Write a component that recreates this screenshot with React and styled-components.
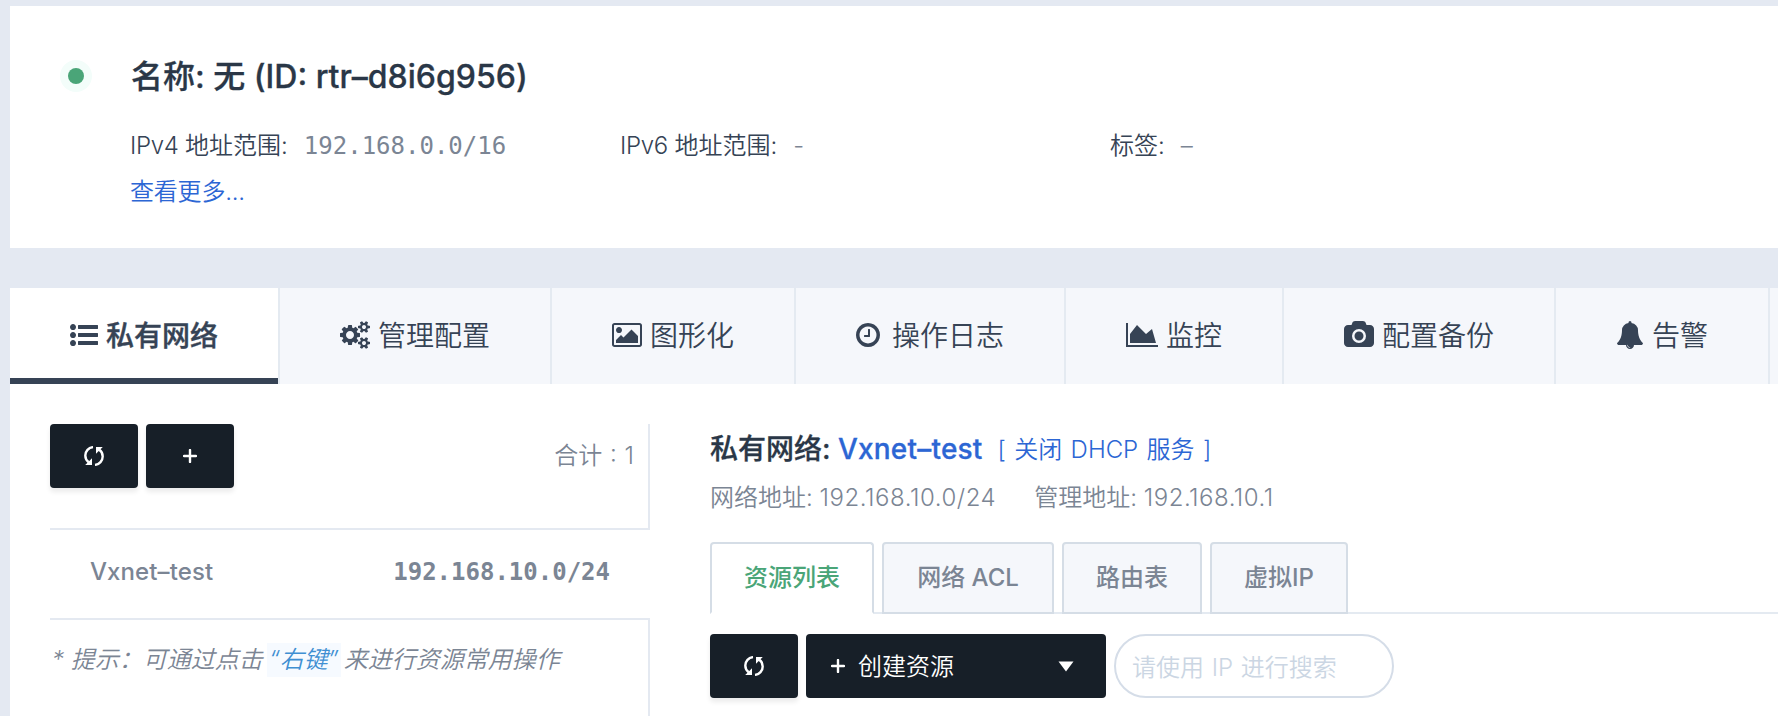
import React from "react";
import styled, { createGlobalStyle, css } from "styled-components";

const Global = createGlobalStyle`
  * { box-sizing: border-box; }
  html, body { margin: 0; padding: 0; }
  body {
    width: 1778px;
    height: 716px;
    overflow: hidden;
    background: #e4e9f2;
    font-family: Inter, "Noto Sans CJK SC", sans-serif;
    font-size: 24px;
    font-weight: 350;
    color: #364355;
  }
`;

const Page = styled.div`
  height: 716px;
  padding: 6px 0 0 10px;
  display: flex;
  flex-direction: column;
  gap: 40px;
  overflow: hidden;
`;

const Latin = styled.span`
  letter-spacing: ${(p) => p.$ls || 0}px;
`;

const Mono = styled.span`
  font-family: "DejaVu Sans Mono", monospace;
  font-size: 24px;
  color: #7b8594;
  font-weight: ${(p) => (p.$bold ? 700 : 400)};
`;

const Summary = styled.section`
  flex: none;
  height: 242px;
  background: #fff;
  display: flex;
  padding: 48px 0 0 50px;
`;

const Status = styled.div`
  width: 32px;
  height: 32px;
  margin: 6px 38px 0 0;
  border-radius: 50%;
  background: #f3fdfa;
  display: flex;
  align-items: center;
  justify-content: center;
  &::before {
    content: "";
    width: 16px;
    height: 16px;
    border-radius: 50%;
    background: #4aa578;
  }
`;

const Title = styled.h1`
  margin: 0;
  padding-left: 1px;
  height: 46px;
  line-height: 46px;
  font-size: 32px;
  font-weight: 500;
  -webkit-text-stroke: 0.3px currentColor;
  color: #2a3747;
  white-space: pre;
`;

const Facts = styled.div`
  display: flex;
  margin-top: 24px;
  height: 44px;
  line-height: 44px;
`;

const Fact = styled.div`
  width: 490px;
  display: flex;
  gap: 16px;
  white-space: pre;
`;

const Muted = styled.span`
  color: #7b8594;
`;

const More = styled.a`
  display: block;
  height: 48px;
  line-height: 48px;
  letter-spacing: -0.2px;
  color: #2c66d4;
`;

const Main = styled.section`
  flex: 1;
  background: #fff;
  display: flex;
  flex-direction: column;
`;

const TabBar = styled.nav`
  display: flex;
  height: 96px;
  flex: none;
  background: #f5f7fb;
`;

const Tab = styled.div`
  flex: none;
  width: ${(p) => p.$w}px;
  padding: 0 0 0 60px;
  display: flex;
  align-items: center;
  gap: ${(p) => p.$gap || 8}px;
  font-size: 28px;
  line-height: 94px;
  border-right: 2px solid #e4eaf1;
  color: #364355;
  ${(p) =>
    p.$active &&
    css`
      font-weight: 500;
      -webkit-text-stroke: 0.4px currentColor;
      background: linear-gradient(#364355, #364355) 0 100% / 100% 6px no-repeat #fff;
    `}
  svg { flex: none; display: block; fill: currentColor; margin-bottom: 2px; }
`;

const Body = styled.div`
  flex: 1;
  display: flex;
  padding: 40px 0 0 40px;
`;

const Side = styled.aside`
  width: 600px;
  flex: none;
  display: flex;
  flex-direction: column;
`;

const SideHead = styled.div`
  height: 106px;
  display: flex;
  gap: 8px;
  border-right: 2px solid #e4e9f1;
  border-bottom: 2px solid #e4e9f1;
`;

const Total = styled.div`
  margin-left: auto;
  margin-right: 14px;
  height: 64px;
  line-height: 64px;
  word-spacing: 1px;
  color: #7b8594;
  white-space: pre;
`;

const DarkButton = styled.button`
  flex: none;
  width: ${(p) => p.$w || 88}px;
  height: 64px;
  padding: 0 32px 0 25px;
  display: flex;
  align-items: center;
  justify-content: ${(p) => (p.$w ? "flex-start" : "center")};
  ${(p) => !p.$w && "padding: 0;"}
  border: 0;
  border-radius: 4px;
  background: #171f28;
  color: #fff;
  font: inherit;
  box-shadow: ${(p) => (p.$w ? "none" : "0 4px 5px rgba(0, 0, 0, 0.08)")};
  svg { display: block; }
`;

const ButtonLabel = styled.span`
  margin-left: 13px;
  margin-right: auto;
  padding-bottom: 4px;
`;

const NetRow = styled.div`
  height: 88px;
  padding: 0 40px 5px 40px;
  display: flex;
  align-items: center;
  justify-content: space-between;
  font-weight: 500;
  color: #7b8594;
`;

const Hint = styled.div`
  flex: 1;
  padding: 20px 0 0 2px;
  border-top: 2px solid #e4e9f1;
  border-right: 2px solid #e4e9f1;
  line-height: 40px;
  font-style: italic;
  color: #7b8594;
  white-space: pre;
`;

const Key = styled.span`
  display: inline-block;
  height: 34px;
  line-height: 34px;
  width: 74px;
  margin: 0 3px 0 4px;
  text-align: center;
  background: #f6faff;
  color: #3f8fd2;
`;

const Detail = styled.div`
  flex: 1;
  margin-left: 60px;
`;

const NetTitle = styled.h2`
  margin: 0;
  height: 50px;
  line-height: 50px;
  font-size: 28px;
  font-weight: 500;
  -webkit-text-stroke: 0.3px currentColor;
  color: #2a3747;
  white-space: pre;
  display: flex;
`;

const Blue = styled.span`
  color: #2c66d4;
  letter-spacing: 0.2px;
`;

const Action = styled.a`
  margin-left: 15px;
  padding-top: 1px;
  font-size: 24px;
  font-weight: 350;
  -webkit-text-stroke: 0;
  word-spacing: 1.6px;
  color: #2c66d4;
`;

const NetMeta = styled.div`
  height: 48px;
  line-height: 48px;
  display: flex;
  gap: 38px;
  color: #7b8594;
  white-space: pre;
`;

const SubTabs = styled.div`
  margin-top: 20px;
  height: 72px;
  display: flex;
  gap: 8px;
  background: linear-gradient(#e4eaf1, #e4eaf1) 0 100% / 100% 2px no-repeat;
`;

const SubTab = styled.div`
  width: ${(p) => p.$w}px;
  height: 72px;
  border: 2px solid #d5dde6;
  border-radius: 4px 4px 0 0;
  background: #f5f7fb;
  color: #7b8594;
  font-weight: 500;
  line-height: 68px;
  text-align: center;
  white-space: pre;
  ${(p) =>
    p.$active &&
    css`
      background: #fff;
      border-bottom-color: #fff;
      color: #4aa578;
    `}
`;

const Tools = styled.div`
  margin-top: 20px;
  display: flex;
  gap: 8px;
`;

const Search = styled.input`
  width: 280px;
  height: 64px;
  padding: 2px 16px 0;
  border: 2px solid #d5dde8;
  border-radius: 32px;
  background: #fff;
  font: inherit;
  letter-spacing: 0;
  word-spacing: 0.9px;
  outline: none;
  &::placeholder { color: #cbd6e3; opacity: 1; }
`;

const ICONS = {
  list: [0, 1792, "M384 1408q0 80-56 136t-136 56-136-56-56-136 56-136 136-56 136 56 56 136zm0-512q0 80-56 136t-136 56-136-56-56-136 56-136 136-56 136 56 56 136zm1408 416v192q0 13-9.5 22.5t-22.5 9.5h-1216q-13 0-22.5-9.5t-9.5-22.5v-192q0-13 9.5-22.5t22.5-9.5h1216q13 0 22.5 9.5t9.5 22.5zm-1408-928q0 80-56 136t-136 56-136-56-56-136 56-136 136-56 136 56 56 136zm1408 416v192q0 13-9.5 22.5t-22.5 9.5h-1216q-13 0-22.5-9.5t-9.5-22.5v-192q0-13 9.5-22.5t22.5-9.5h1216q13 0 22.5 9.5t9.5 22.5zm0-512v192q0 13-9.5 22.5t-22.5 9.5h-1216q-13 0-22.5-9.5t-9.5-22.5v-192q0-13 9.5-22.5t22.5-9.5h1216q13 0 22.5 9.5t9.5 22.5z"],
  cogs: [-64, 1920, "M832 896q0-106-75-181t-181-75-181 75-75 181 75 181 181 75 181-75 75-181zm768 512q0-52-38-90t-90-38-90 38-38 90q0 53 37.5 90.5t90.5 37.5 90.5-37.5 37.5-90.5zm0-1024q0-52-38-90t-90-38-90 38-38 90q0 53 37.5 90.5t90.5 37.5 90.5-37.5 37.5-90.5zm-384 421v185q0 10-7 19.5t-16 10.5l-155 24q-11 35-32 76 34 48 90 115 7 11 7 20 0 12-7 19-23 30-82.5 89.5t-78.5 59.5q-11 0-21-7l-115-90q-37 19-77 31-11 108-23 155-7 24-30 24h-186q-11 0-20-7.5t-10-17.5l-23-153q-34-10-75-31l-118 89q-7 7-20 7-11 0-21-8-144-133-144-160 0-9 7-19 10-14 41-53t47-61q-23-44-35-82l-152-24q-10-1-17-9.5t-7-19.5v-185q0-10 7-19.5t16-10.5l155-24q11-35 32-76-34-48-90-115-7-11-7-20 0-12 7-20 22-30 82-89t79-59q11 0 21 7l115 90q34-18 77-32 11-108 23-154 7-24 30-24h186q11 0 20 7.5t10 17.5l23 153q34 10 75 31l118-89q8-7 20-7 11 0 21 8 144 133 144 160 0 8-7 19-12 16-42 54t-45 60q23 48 34 82l152 23q10 2 17 10.5t7 19.5zm640 533v140q0 16-149 31-12 27-30 52 51 113 51 138 0 4-4 7-122 71-124 71-8 0-46-47t-52-68q-20 2-30 2t-30-2q-14 21-52 68t-46 47q-2 0-124-71-4-3-4-7 0-25 51-138-18-25-30-52-149-15-149-31v-140q0-16 149-31 13-29 30-52-51-113-51-138 0-4 4-7 4-2 35-20t59-34 30-16q8 0 46 46.5t52 67.5q20-2 30-2t30 2q51-71 92-112l6-2q4 0 124 70 4 3 4 7 0 25-51 138 17 23 30 52 149 15 149 31zm0-1024v140q0 16-149 31-12 27-30 52 51 113 51 138 0 4-4 7-122 71-124 71-8 0-46-47t-52-68q-20 2-30 2t-30-2q-14 21-52 68t-46 47q-2 0-124-71-4-3-4-7 0-25 51-138-18-25-30-52-149-15-149-31v-140q0-16 149-31 13-29 30-52-51-113-51-138 0-4 4-7 4-2 35-20t59-34 30-16q8 0 46 46.5t52 67.5q20-2 30-2t30 2q51-71 92-112l6-2q4 0 124 70 4 3 4 7 0 25-51 138 17 23 30 52 149 15 149 31z"],
  image: [-64, 1920, "M576 576q0 80-56 136t-136 56-136-56-56-136 56-136 136-56 136 56 56 136zm1024 384v448h-1408v-192l320-320 160 160 512-512zm96-704h-1600q-13 0-22.5 9.5t-9.5 22.5v1216q0 13 9.5 22.5t22.5 9.5h1600q13 0 22.5-9.5t9.5-22.5v-1216q0-13-9.5-22.5t-22.5-9.5zm160 32v1216q0 66-47 113t-113 47h-1600q-66 0-113-47t-47-113v-1216q0-66 47-113t113-47h1600q66 0 113 47t47 113z"],
  clock: [128, 1536, "M1024 544v448q0 14-9 23t-23 9h-320q-14 0-23-9t-9-23v-64q0-14 9-23t23-9h224v-352q0-14 9-23t23-9h64q14 0 23 9t9 23zm416 352q0-148-73-273t-198-198-273-73-273 73-198 198-73 273 73 273 198 198 273 73 273-73 198-198 73-273zm224 0q0 209-103 385.5t-279.5 279.5-385.5 103-385.5-103-279.5-279.5-103-385.5 103-385.5 279.5-279.5 385.5-103 385.5 103 279.5 279.5 103 385.5z"],
  area: [-128, 2048, "M1920 1536v128h-2048v-1536h128v1408h1920zm-384-1024l256 896h-1664v-576l448-576 576 576z"],
  camera: [-64, 1920, "M896 672q119 0 203.5 84.5t84.5 203.5-84.5 203.5-203.5 84.5-203.5-84.5-84.5-203.5 84.5-203.5 203.5-84.5zm704-416q106 0 181 75t75 181v896q0 106-75 181t-181 75h-1408q-106 0-181-75t-75-181v-896q0-106 75-181t181-75h224l51-136q19-49 69.5-84.5t103.5-35.5h512q53 0 103.5 35.5t69.5 84.5l51 136h224zm-704 1152q185 0 316.5-131.5t131.5-316.5-131.5-316.5-316.5-131.5-316.5 131.5-131.5 316.5 131.5 316.5 316.5 131.5z"],
  bell: [0, 1792, "M912 1696q0-16-16-16-59 0-101.5-42.5t-42.5-101.5q0-16-16-16t-16 16q0 73 51.5 124.5t124.5 51.5q16 0 16-16zm816-288q0 52-38 90t-90 38h-448q0 106-75 181t-181 75-181-75-75-181h-448q-52 0-90-38t-38-90q50-42 91-88t85-119.5 74.5-158.5 50-206 19.5-260q0-152 117-282.5t307-158.5q-8-19-8-39 0-40 28-68t68-28 68 28 28 68q0 20-8 39 190 28 307 158.5t117 282.5q0 139 19.5 260t50 206 74.5 158.5 85 119.5 91 88z"],
};

function TabIcon({ name }) {
  const [x, w, d] = ICONS[name];
  return (
    <svg width={w / 64} height="28" viewBox={`${x} 0 ${w} 1792`} overflow="visible">
      <path d={d} />
    </svg>
  );
}

function RefreshIcon() {
  return (
    <svg width="20" height="20" viewBox="0 0 20 20">
      <g fill="none" stroke="#fff" strokeWidth="2.4">
        <path d="M9 1.100C4.600 1.600 1.300 5.300 1.300 9.600C1.300 12.300 2.600 14.700 4.600 16.200" />
        <path d="M11 18.900C15.400 18.400 18.700 14.700 18.700 10.400C18.700 7.700 17.400 5.300 15.400 3.800" />
      </g>
      <path fill="#fff" d="M1.200 19L8 19L8 12.200ZM18.800 1L12 1L12 7.800Z" />
    </svg>
  );
}

function PlusIcon() {
  return (
    <svg width="14" height="14" viewBox="0 0 14 14">
      <path d="M7 1V13M1 7H13" stroke="#fff" strokeWidth="2.400" strokeLinecap="round" />
    </svg>
  );
}

const TABS = [
  { icon: "list", label: "私有网络", w: 270, active: true },
  { icon: "cogs", label: "管理配置", w: 272 },
  { icon: "image", label: "图形化", w: 244 },
  { icon: "clock", label: "操作日志", w: 270, gap: 12 },
  { icon: "area", label: "监控", w: 218 },
  { icon: "camera", label: "配置备份", w: 272 },
  { icon: "bell", label: "告警", w: 214 },
];

const SUB_TABS = [
  { label: "资源列表", w: 164, active: true },
  { label: "网络 ACL", w: 172 },
  { label: "路由表", w: 140 },
  { label: "虚拟IP", w: 138 },
];

export default function App() {
  return (
    <Page>
      <Global />
      <Summary>
        <Status />
        <div>
          <Title>
            名称: 无 <Latin>(ID: rtr–d8i6g956)</Latin>
          </Title>
          <Facts>
            <Fact>
              <span><Latin $ls={-0.3}>IPv4 </Latin>地址范围:</span>
              <Mono>192.168.0.0/16</Mono>
            </Fact>
            <Fact>
              <span><Latin $ls={-0.3}>IPv6 </Latin>地址范围:</span>
              <Muted>-</Muted>
            </Fact>
            <Fact>
              <span>标签:</span>
              <Muted>–</Muted>
            </Fact>
          </Facts>
          <More>查看更多...</More>
        </div>
      </Summary>
      <Main>
        <TabBar>
          {TABS.map((t) => (
            <Tab key={t.icon} $w={t.w} $gap={t.gap} $active={t.active}>
              <TabIcon name={t.icon} />
              {t.label}
            </Tab>
          ))}
        </TabBar>
        <Body>
          <Side>
            <SideHead>
              <DarkButton><RefreshIcon /></DarkButton>
              <DarkButton><PlusIcon /></DarkButton>
              <Total>合计 : 1</Total>
            </SideHead>
            <NetRow>
              <Latin $ls={0.1}>Vxnet–test</Latin>
              <Mono $bold>192.168.10.0/24</Mono>
            </NetRow>
            <Hint>
              * 提示：可通过点击<Key>“右键”</Key>来进行资源常用操作
            </Hint>
          </Side>
          <Detail>
            <NetTitle>
              私有网络: <Blue>Vxnet–test</Blue>
              <Action>[ 关闭 DHCP 服务 ]</Action>
            </NetTitle>
            <NetMeta>
              <span>网络地址: <Latin $ls={0.55}>192.168.10.0/24</Latin></span>
              <span>管理地址: <Latin $ls={0.5}>192.168.10.1</Latin></span>
            </NetMeta>
            <SubTabs>
              {SUB_TABS.map((t) => (
                <SubTab key={t.label} $w={t.w} $active={t.active}>{t.label}</SubTab>
              ))}
            </SubTabs>
            <Tools>
              <DarkButton><RefreshIcon /></DarkButton>
              <DarkButton $w={300}>
                <PlusIcon />
                <ButtonLabel>创建资源</ButtonLabel>
                <svg width="16" height="11" viewBox="0 0 16 11"><path d="M0.500 0.500H15.500L8 10.500Z" fill="#fff" /></svg>
              </DarkButton>
              <Search placeholder="请使用 IP 进行搜索" />
            </Tools>
          </Detail>
        </Body>
      </Main>
    </Page>
  );
}
